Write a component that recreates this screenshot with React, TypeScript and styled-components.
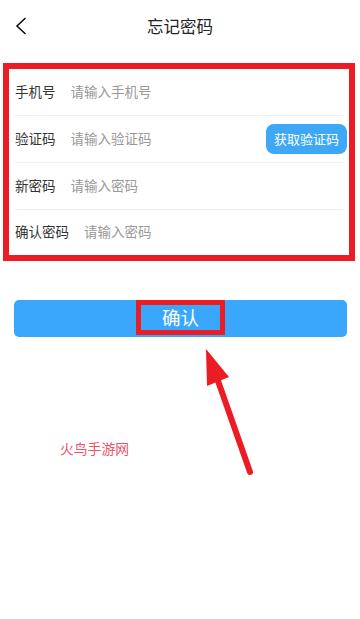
import React from "react";
import styled, { createGlobalStyle } from "styled-components";

const GlobalStyle = createGlobalStyle`
  html, body {
    margin: 0;
    padding: 0;
    background: #fff;
  }
  body {
    font-family: "Noto Sans CJK SC", "Noto Sans", sans-serif;
    color: #333;
  }
  * {
    box-sizing: border-box;
  }
`;

const fields = [
  { label: "手机号", placeholder: "请输入手机号" },
  { label: "验证码", placeholder: "请输入验证码", code: true },
  { label: "新密码", placeholder: "请输入密码" },
  { label: "确认密码", placeholder: "请输入密码" },
];

const App: React.FC = () => {
  return (
    <Page>
      <GlobalStyle />
      <Header>
        <BackButton type="button" aria-label="返回">
          <svg width="12" height="18" viewBox="0 0 12 18">
            <path
              d="M10.5 1 L2 9 L10.5 17"
              fill="none"
              stroke="#111"
              strokeWidth="1.6"
            />
          </svg>
        </BackButton>
        <Title>忘记密码</Title>
        <span />
      </Header>

      <Marked>
        {fields.map((f, i) => (
          <Row key={i} $last={i === fields.length - 1}>
            <Label>{f.label}</Label>
            <Input placeholder={f.placeholder} />
            {f.code && <CodeButton type="button">获取验证码</CodeButton>}
          </Row>
        ))}
      </Marked>

      <Submit type="button">
        <SubmitText>确认</SubmitText>
      </Submit>

      <Watermark>火鸟手游网</Watermark>

      <Arrow width="65" height="140" viewBox="0 0 65 140">
        <line
          x1="22"
          y1="38"
          x2="55"
          y2="132"
          stroke="#ec1c24"
          strokeWidth="6"
          strokeLinecap="round"
        />
        <polygon points="11,9 12,46 34,37" fill="#ec1c24" />
      </Arrow>
    </Page>
  );
};

const Page = styled.div`
  position: relative;
  width: 360px;
  height: 619px;
  background: #fff;
  overflow: hidden;
`;

const Header = styled.div`
  display: grid;
  grid-template-columns: 60px 1fr 60px;
  align-items: center;
  height: 52px;
`;

const BackButton = styled.button`
  display: flex;
  align-items: center;
  padding: 0 0 0 15px;
  height: 52px;
  background: transparent;
  border: 0;
`;

const Title = styled.div`
  text-align: center;
  font-size: 16.5px;
  color: #222;
  line-height: 1;
`;

const Marked = styled.div`
  margin: 11px 5px 0 3px;
  border: 6px solid #ec1c24;
  background: #fff;
`;

const Row = styled.div<{ $last?: boolean }>`
  display: flex;
  align-items: center;
  height: ${(p) => (p.$last ? "45px" : "47px")};
  margin: 0 5px;
  padding: 0 0 3px 1px;
  border-bottom: ${(p) => (p.$last ? "none" : "1px solid #f1f1f1")};
`;

const Label = styled.span`
  flex: none;
  font-size: 13.5px;
  color: #333;
  margin-right: 15px;
`;

const Input = styled.input`
  flex: 1;
  min-width: 0;
  border: 0;
  outline: none;
  padding: 0;
  font-family: inherit;
  font-size: 13.5px;
  color: #333;
  background: transparent;
  &::placeholder {
    color: #999;
  }
`;

const CodeButton = styled.button`
  flex: none;
  width: 81px;
  height: 30px;
  margin: 2px -3px 0 0;
  border: 0;
  border-radius: 8px;
  background: #3ea8f8;
  color: #fff;
  font-family: inherit;
  font-size: 13px;
  padding: 0;
`;

const Submit = styled.button`
  display: flex;
  align-items: center;
  justify-content: center;
  width: 333px;
  height: 37px;
  margin: 39px 0 0 14px;
  padding: 0;
  border: 0;
  border-radius: 5px;
  background: #3aa7fc;
`;

const SubmitText = styled.span`
  display: inline-flex;
  align-items: center;
  justify-content: center;
  width: 89px;
  height: 35px;
  margin-top: -3px;
  border: 5px solid #ec1c24;
  color: #fff;
  font-family: "Noto Sans CJK SC", sans-serif;
  font-size: 18.5px;
  line-height: 1;
`;

const Watermark = styled.div`
  margin: 104px 0 0 60px;
  font-size: 13.8px;
  line-height: 14px;
  color: #f0506a;
`;

const Arrow = styled.svg`
  position: absolute;
  left: 195px;
  top: 340px;
`;

export default App;
